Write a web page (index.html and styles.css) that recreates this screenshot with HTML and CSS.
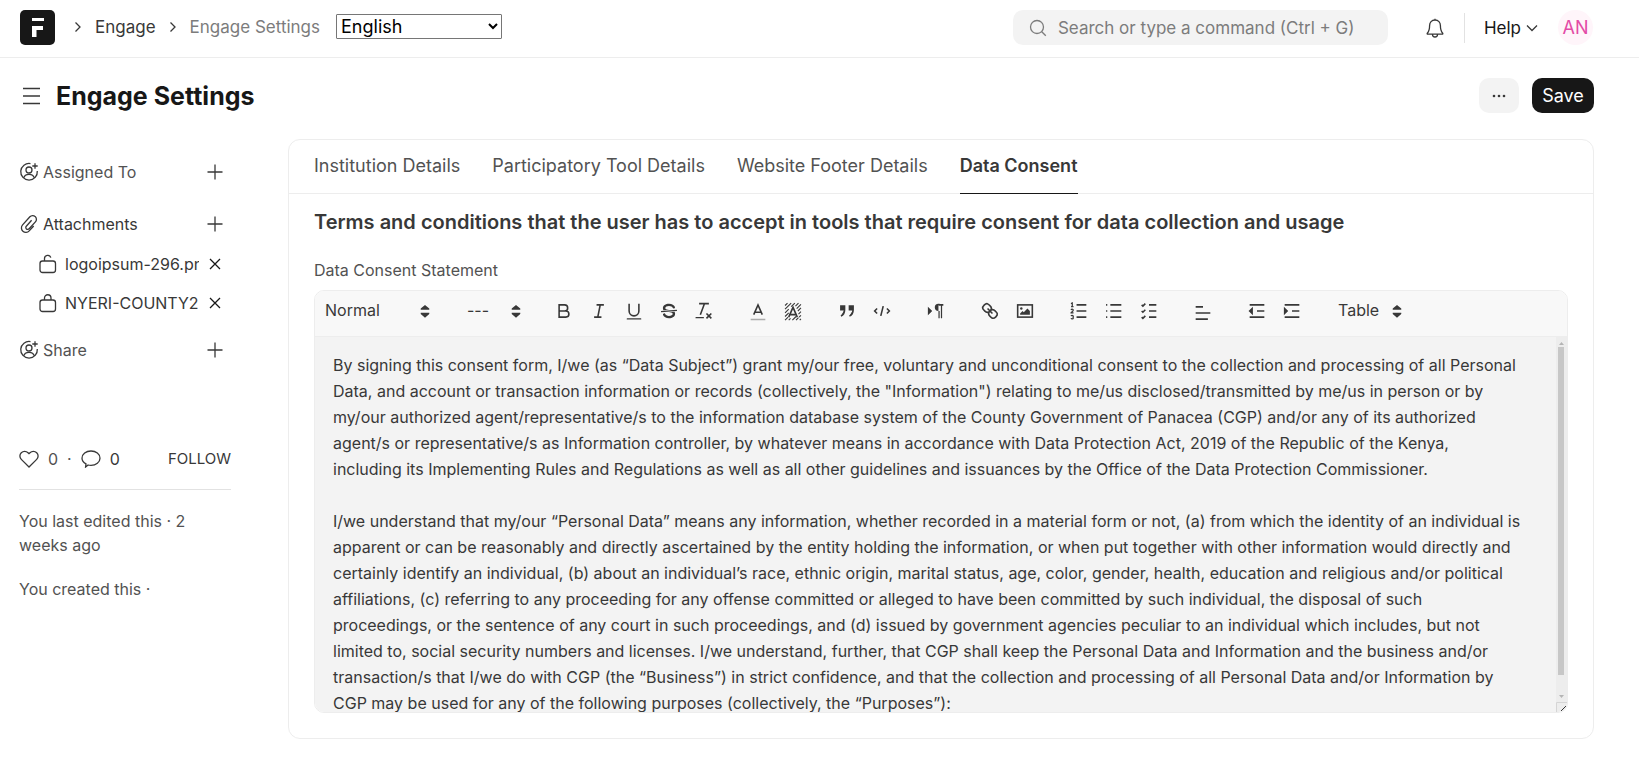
FILE: index.html
```html
<!DOCTYPE html>
<html lang="en">
<head>
<meta charset="utf-8">
<title>Engage Settings</title>
<link rel="stylesheet" href="styles.css">
</head>
<body>
<svg class="sprite" aria-hidden="true">
  <symbol id="chev" viewBox="0 0 8 12"><path d="M1.5 1.5 6 6l-4.500 4.500"/></symbol>
  <symbol id="plus" viewBox="0 0 16 16"><path d="M8 .5v15M.5 8h15"/></symbol>
  <symbol id="close" viewBox="0 0 12 12"><path d="m1 1 10 10m0-10-10 10"/></symbol>
  <symbol id="assign" viewBox="0 0 20 20"><path d="M11.500 1.600A8.300 8.300 0 1 0 18.300 9M4.600 16.200c.7-2.700 2.700-3.900 5.400-3.900s4.700 1.200 5.400 3.900M16 1.300v5.400M13.300 4h5.400"/><circle cx="10" cy="8" r="3"/></symbol>
  <symbol id="updown" viewBox="0 0 18 18"><path d="M5.500 10.500h7v1L9 14.500l-3.500-3zM5.500 8h7V7L9 4 5.500 7z"/></symbol>
</svg>

<header class="navbar">
  <a class="logo" href="#" aria-label="Home"><svg viewBox="0 0 35 35"><path d="M12 8h12v3H12zM12 16h11v4h-6.500v7H12z"/></svg></a>
  <nav class="crumbs">
    <svg class="chev"><use href="#chev"/></svg>
    <a href="#">Engage</a>
    <svg class="chev"><use href="#chev"/></svg>
    <a class="current" href="#">Engage Settings</a>
  </nav>
  <select class="lang" aria-label="Language"><option>English</option></select>
  <label class="search">
    <svg viewBox="0 0 18 18"><circle cx="8" cy="8" r="6.500"/><path d="m12.800 12.800 4 4"/></svg>
    <input type="text" placeholder="Search or type a command (Ctrl + G)" aria-label="Search">
  </label>
  <button class="bell" aria-label="Notifications"><svg viewBox="0 0 18 20"><path d="M9 2c-3.400 0-5.400 2.500-5.400 5.500 0 4-.6 6-2.300 7.700-.3.500-.1 1 .5 1h14.400c.6 0 .8-.5.500-1-1.700-1.700-2.300-3.700-2.300-7.700C14.400 4.500 12.400 2 9 2zM9 2V.7M6.500 16.500a2.500 2.500 0 0 0 5 0"/></svg></button>
  <button class="help">Help <svg viewBox="0 0 12 8"><path d="m1 1.500 5 5 5-5"/></svg></button>
  <button class="avatar">AN</button>
</header>

<div class="page-head">
  <button class="burger" aria-label="Toggle sidebar"><svg viewBox="0 0 17 18"><path d="M0 1.500h17M0 9h17M0 16.500h17"/></svg></button>
  <h1>Engage Settings</h1>
  <button class="more" aria-label="More"><svg viewBox="0 0 14 4"><circle cx="2" cy="2" r="1.300"/><circle cx="7" cy="2" r="1.300"/><circle cx="12" cy="2" r="1.300"/></svg></button>
  <button class="save">Save</button>
</div>

<div class="layout">
  <aside class="sidebar">
    <div class="row">
      <svg class="ico" viewBox="0 0 20 20"><use href="#assign"/></svg><span>Assigned To</span>
      <button aria-label="Add assignee"><svg class="plus"><use href="#plus"/></svg></button>
    </div>
    <div class="row dark">
      <svg class="ico" viewBox="0 0 20 20"><path d="m12.600 6.300-5.300 5.900a1.900 1.900 0 0 0 2.800 2.600l6.300-6.900a3.700 3.700 0 0 0-.2-5.300 3.700 3.700 0 0 0-5.300.2L3.600 10.900a4.400 4.400 0 0 0 .3 6.300 4.400 4.400 0 0 0 6.300-.3l4.500-4.900"/></svg><span>Attachments</span>
      <button aria-label="Add attachment"><svg class="plus"><use href="#plus"/></svg></button>
    </div>
    <div class="row file">
      <svg class="ico" viewBox="0 0 20 20"><rect x="2" y="7" width="15.500" height="11.500" rx="2.500"/><path d="M6.500 7V4.500a3.200 3.200 0 0 1 6.300-.8"/></svg><a href="#">logoipsum-296.png</a>
      <button aria-label="Remove file"><svg class="close"><use href="#close"/></svg></button>
    </div>
    <div class="row file">
      <svg class="ico" viewBox="0 0 20 20"><rect x="2" y="7" width="15.500" height="11.500" rx="2.500"/><path d="M6.500 7V5a3.200 3.200 0 0 1 6.500 0v2"/></svg><a href="#">NYERI-COUNTY2.png</a>
      <button aria-label="Remove file"><svg class="close"><use href="#close"/></svg></button>
    </div>
    <div class="row share">
      <svg class="ico" viewBox="0 0 20 20"><use href="#assign"/></svg><span>Share</span>
      <button aria-label="Add share"><svg class="plus"><use href="#plus"/></svg></button>
    </div>
    <div class="stats">
      <svg class="ico" viewBox="0 0 20 18"><path d="M10 17 2.300 9.400a4.700 4.700 0 0 1 0-6.700 4.700 4.700 0 0 1 6.700 0l1 1 1-1a4.700 4.700 0 0 1 6.700 0 4.700 4.700 0 0 1 0 6.700z"/></svg>
      <span>0</span><span>·</span>
      <svg class="ico" viewBox="0 0 20 18"><path d="M10 1c5 0 9 3.200 9 7.200s-4 7.200-9 7.200c-1 0-2-.1-2.900-.4L4.600 17l.4-3.200C2.500 12.500 1 10.500 1 8.200 1 4.200 5 1 10 1z"/></svg>
      <span class="ink">0</span>
      <button class="follow">FOLLOW</button>
    </div>
    <p>You last edited this · 2 weeks ago</p>
    <p>You created this ·</p>
  </aside>

  <main class="card">
    <nav class="tabs">
      <a href="#">Institution Details</a>
      <a href="#">Participatory Tool Details</a>
      <a href="#">Website Footer Details</a>
      <a class="active" href="#">Data Consent</a>
    </nav>
    <section class="section">
      <h2>Terms and conditions that the user has to accept in tools that require consent for data collection and usage</h2>
      <div class="field-label" id="consent-label">Data Consent Statement</div>
      <div class="editor">
        <div class="toolbar">
          <div class="picker heading"><select aria-label="Heading"><option>Normal</option></select><svg><use href="#updown"/></svg></div>
          <div class="picker size"><select aria-label="Size"><option>---</option></select><svg><use href="#updown"/></svg></div>
          <div class="group">
            <button aria-label="Bold"><svg viewBox="0 0 18 18"><path d="M5 4h4.500a2.500 2.500 0 0 1 0 5H5zM5 9h5.500a2.500 2.500 0 0 1 0 5H5z"/></svg></button>
            <button aria-label="Italic"><svg viewBox="0 0 18 18"><path d="M7 4h6M5 14h6M8 14l2-10"/></svg></button>
            <button aria-label="Underline"><svg viewBox="0 0 18 18"><path d="M5 3v6a4 4 0 0 0 8 0V3"/><rect class="f" x="3" y="15" width="12" height="1" rx=".5"/></svg></button>
            <button aria-label="Strike"><svg viewBox="0 0 18 18"><path class="thin" d="m15.500 8.500-13 1"/><path class="f" d="M9.007 8C6.542 7.791 6 7.519 6 6.500 6 5.792 7.283 5 9 5c1.571 0 2.765.679 2.969 1.309a1 1 0 0 0 1.900-.617C13.356 4.106 11.354 3 9 3 6.200 3 4 4.538 4 6.500a3.200 3.200 0 0 0 .5 1.843ZM8.984 10C11.457 10.208 12 10.479 12 11.500c0 .708-1.283 1.500-3 1.500-1.571 0-2.765-.679-2.969-1.309a1 1 0 1 0-1.900.617C4.644 13.894 6.646 15 9 15c2.800 0 5-1.538 5-3.500a3.200 3.200 0 0 0-.5-1.843Z"/></svg></button>
            <button aria-label="Clear formatting"><svg viewBox="0 0 18 18"><path d="M5 3h8M6 12l3.350-9M11 11l4 4M15 11l-4 4"/><rect class="f" x="2" y="14" width="7" height="1" rx=".5"/></svg></button>
          </div>
          <div class="group">
            <button aria-label="Text colour"><svg viewBox="0 0 18 18"><path class="faint" d="M3 16h12"/><path d="M5.500 12 9 4l3.500 8M11.630 10H6.380"/></svg></button>
            <button aria-label="Background colour"><svg viewBox="0 0 18 18"><path class="hatch" d="M2.500 4.500l2-2M2.500 7.500l5-5M2.500 10.500l3-3M7.500 5.500l3-3M2.500 13.500l3-3M11 5l2.500-2.500M2.500 16.500l2.500-2.500M12 7l3.500-3.500M13 9l2.500-2.500M13.500 11.500l2-2M14 14l1.500-1.500M5.500 16.500l1.500-1.500M8.500 16.500l3-3M11.500 16.500l2-2M14.500 16.500l1-1"/><path d="M5.500 14 9 6l3.500 8M11.630 12H6.380"/></svg></button>
          </div>
          <div class="group">
            <button aria-label="Quote"><svg viewBox="0 0 18 18"><path class="fs" d="M4 5h3v3H4zM11 5h3v3h-3zM7 8c0 4.031-3 5-3 5M14 8c0 4.031-3 5-3 5"/></svg></button>
            <button aria-label="Code"><svg viewBox="0 0 18 18"><path d="M5 7 3 9l2 2M13 7l2 2-2 2M10 5 8 13"/></svg></button>
          </div>
          <div class="group">
            <button aria-label="Text direction"><svg viewBox="0 0 18 18"><path class="fs" d="m3 11 2-2-2-2z"/><path d="M15 4h-4"/><path class="f" d="M11 3a3 3 0 0 0 0 6h1V3zM11 4h1v11h-1zM13 4h1v11h-1z"/></svg></button>
          </div>
          <div class="group">
            <button aria-label="Link"><svg viewBox="0 0 18 18"><path d="m7 7 4 4M8.900 4.577a3.476 3.476 0 0 1 .36 4.679A3.476 3.476 0 0 1 4.577 8.900C3.185 7.500 2.035 6.400 4.217 4.217S7.500 3.185 8.900 4.577ZM13.423 9.100a3.476 3.476 0 0 0-4.679-.36 3.476 3.476 0 0 0 .36 4.679c1.392 1.392 2.500 2.542 4.679.36S14.815 10.500 13.423 9.100Z"/></svg></button>
            <button aria-label="Image"><svg viewBox="0 0 18 18"><rect x="3" y="4" width="12" height="10"/><circle class="f" cx="6" cy="7" r="1"/><path class="f" d="M5 12v-1l2-2 1 1 3-3 2 2v3z"/></svg></button>
          </div>
          <div class="group">
            <button aria-label="Numbered list"><svg viewBox="0 0 18 18"><path d="M7 4h8M7 9h8M7 14h8"/><path class="thin" d="M2.500 5.500h2M2.400 2.900l1.100-.5v3M4.500 10.500h-2c0-.234 1.850-1.076 1.850-2.234A.959.959 0 0 0 2.500 8.156M2.500 14.846a.959.959 0 0 0 1.850-.109A.7.7 0 0 0 3.750 14a.688.688 0 0 0 .6-.736.959.959 0 0 0-1.850-.109"/></svg></button>
            <button aria-label="Bullet list"><svg viewBox="0 0 18 18"><path d="M6 4h9M6 9h9M6 14h9"/><path d="M2.500 4h1M2.500 9h1M2.500 14h1"/></svg></button>
            <button aria-label="Check list"><svg viewBox="0 0 18 18"><path d="M9 4h6M9 9h6M9 14h6M3 4l1 1 2-2M3 9l1 1 2-2M3 14l1 1 2-2"/></svg></button>
          </div>
          <div class="group low">
            <button aria-label="Align"><svg viewBox="0 0 18 18"><path d="M3 4h6M3 9h12M3 14h10"/></svg></button>
          </div>
          <div class="group">
            <button aria-label="Outdent"><svg viewBox="0 0 18 18"><path d="M3 4h12M9 9h6M3 14h12"/><path class="fs" d="M5 7v4L3 9z"/></svg></button>
            <button aria-label="Indent"><svg viewBox="0 0 18 18"><path d="M3 4h12M9 9h6M3 14h12"/><path class="fs" d="M3 7v4l2-2z"/></svg></button>
          </div>
          <div class="picker table"><select aria-label="Table"><option>Table</option></select><svg><use href="#updown"/></svg></div>
        </div>
        <div class="body">
          <div class="content" contenteditable="true" role="textbox" aria-multiline="true" aria-labelledby="consent-label">
            <p>By signing this consent form, I/we (as “Data Subject”) grant my/our free, voluntary and unconditional consent to the collection and processing of all Personal Data, and account or transaction information or records (collectively, the "Information") relating to me/us disclosed/transmitted by me/us in person or by my/our authorized agent/representative/s to the information database system of the County Government of Panacea (CGP) and/or any of its authorized agent/s or representative/s as Information controller, by whatever means in accordance with Data Protection Act, 2019 of the Republic of the Kenya, including its Implementing Rules and Regulations as well as all other guidelines and issuances by the Office of the Data Protection Commissioner.</p>
            <p><br></p>
            <p>I/we understand that my/our “Personal Data” means any information, whether recorded in a material form or not, (a) from which the identity of an individual is apparent or can be reasonably and directly ascertained by the entity holding the information, or when put together with other information would directly and certainly identify an individual, (b) about an individual’s race, ethnic origin, marital status, age, color, gender, health, education and religious and/or political affiliations, (c) referring to any proceeding for any offense committed or alleged to have been committed by such individual, the disposal of such proceedings, or the sentence of any court in such proceedings, and (d) issued by government agencies peculiar to an individual which includes, but not limited to, social security numbers and licenses. I/we understand, further, that CGP shall keep the Personal Data and Information and the business and/or transaction/s that I/we do with CGP (the “Business”) in strict confidence, and that the collection and processing of all Personal Data and/or Information by CGP may be used for any of the following purposes (collectively, the “Purposes”):</p>
          </div>
          <div class="scroll" aria-hidden="true">
            <svg viewBox="0 0 11 10"><path d="M3 8 5.500 5 8 8z"/></svg>
            <div class="thumb"></div>
            <svg viewBox="0 0 11 10"><path d="M3 3 5.500 6 8 3z"/></svg>
            <svg class="grip" viewBox="0 0 11 10"><path d="M.5 10V.500H11"/><path class="dots" d="m5 9 5-5M8 9l2-2"/></svg>
          </div>
        </div>
      </div>
    </section>
  </main>
</div>
</body>
</html>
```
FILE: styles.css
```css
* { box-sizing: border-box; }
body {
  margin: 0;
  background: #fff;
  color: #383838;
  font: 16px/24px Inter, "Liberation Sans", sans-serif;
}
a { color: inherit; text-decoration: none; }
button, select, input { font: inherit; color: inherit; margin: 0; }
button { padding: 0; border: 0; background: none; cursor: pointer; }
svg { display: block; flex: none; fill: none; stroke: #383838; stroke-width: 1.3; }
h1, h2, p { margin: 0; }
.sprite { position: absolute; width: 0; height: 0; }

.navbar {
  display: flex;
  align-items: center;
  height: 58px;
  padding: 0 46px 2px 20px;
  border-bottom: 1px solid #ededed;
  font-size: 17px;
}
.logo { width: 35px; height: 35px; border-radius: 5px; background: #171717; }
.logo svg { fill: #fff; stroke: none; }
.crumbs { display: flex; align-items: center; gap: 13px; padding: 0 0 1px 19px; }
.crumbs .current { color: #7c7c7c; }
.chev { width: 8px; height: 12px; }
.lang {
  width: 166px;
  height: 25px;
  margin: 0 0 2px 16px;
  padding: 0;
  border: 1px solid #767676;
  border-radius: 1px;
  background: #fff;
  color: #000;
  font-size: 18px;
}
.search {
  display: flex;
  align-items: center;
  gap: 11px;
  width: 375px;
  height: 35px;
  margin-left: auto;
  padding: 0 16px;
  border-radius: 10px;
  background: #f3f3f3;
}
.search svg { width: 18px; height: 18px; stroke: #7c7c7c; }
.search input { flex: 1; min-width: 0; padding: 0; border: 0; outline: 0; background: none; }
.search input::placeholder { color: #7c7c7c; }
.bell { margin-left: 38px; }
.bell svg { width: 18px; height: 20px; }
.help {
  display: flex;
  align-items: center;
  gap: 5px;
  height: 30px;
  margin-left: 20px;
  padding-left: 19px;
  border-left: 1px solid #e2e2e2;
  color: #171717;
}
.help svg { width: 12px; height: 8px; }
.avatar { width: 35px; height: 35px; margin-left: 20px; border-radius: 50%; background: #fff5fa; color: #e34aa6; font-size: 18px; }

.page-head {
  display: flex;
  align-items: center;
  height: 75px;
  padding: 0 45px 0 23px;
}
.burger svg { width: 17px; height: 18px; }
h1 { margin: 0 auto 0 16px; color: #171717; font-size: 25px; line-height: 32px; font-weight: 700; }
.more { display: grid; place-items: center; width: 40px; height: 35px; border-radius: 10px; background: #f3f3f3; }
.more svg { width: 14px; height: 4px; fill: #383838; stroke: none; }
.save { width: 62px; height: 35px; margin-left: 13px; border-radius: 10px; background: #171717; color: #fff; font-size: 18px; }

.layout { display: flex; gap: 57px; padding: 6px 45px 19px 19px; }
.sidebar { flex: 0 0 212px; min-width: 0; padding-top: 21px; color: #525252; }
.row { display: flex; align-items: center; gap: 4px; height: 24px; margin-bottom: 28px; }
.row .ico { width: 20px; height: 20px; }
.row button { display: grid; place-items: center; width: 18px; height: 24px; margin: 0 7px 0 auto; }
.plus { width: 16px; height: 16px; }
.close { width: 12px; height: 12px; stroke: #171717; }
.dark, .file { color: #383838; }
.dark { margin-bottom: 16px; }
.file { gap: 7px; margin-bottom: 15px; padding-left: 19px; }
.file a { flex: 1; min-width: 0; overflow: hidden; white-space: nowrap; }
.share { margin-top: 23px; margin-bottom: 85px; }
.stats { display: flex; align-items: center; gap: 9px; padding-bottom: 18px; margin-bottom: 19px; border-bottom: 1px solid #e2e2e2; }
.stats .ico { width: 20px; height: 18px; }
.ink { color: #383838; }
.follow { margin-left: auto; font-size: 15px; color: #383838; }
.sidebar p { margin-bottom: 20px; padding-right: 30px; }

.card { flex: 1; min-width: 0; border: 1px solid #ededed; border-radius: 12px; }
.tabs { display: flex; gap: 32px; height: 54px; padding: 0 25px; border-bottom: 1px solid #ededed; font-size: 18px; color: #525252; }
.tabs a { height: 54px; padding-top: 14px; }
.tabs .active { border-bottom: 1px solid #171717; color: #383838; font-weight: 600; }
.section { padding: 14px 25px 15px; }
h2 { font-size: 20px; line-height: 28px; font-weight: 600; }
.field-label { margin: 22px 0 8px; color: #525252; }
.editor { margin-bottom: 10px; border: 1px solid #ededed; border-radius: 10px; overflow: hidden; }
.toolbar { display: flex; align-items: center; gap: 19px; height: 46px; padding: 0 10px 5px; border-bottom: 1px solid #ededed; background: #f8f8f8; }
.group { display: flex; }
.group button { display: grid; place-items: center; width: 35px; height: 30px; }
.group svg { width: 22px; height: 22px; }
.low { padding-top: 4px; }
.f { fill: #383838; stroke: none; }
.fs { fill: #383838; }
.thin { stroke-width: 1; }
.faint { opacity: .4; }
.hatch { stroke-width: .9; }
.picker { position: relative; padding-bottom: 2px; }
.picker select { appearance: none; width: 100%; padding: 0; border: 0; outline: 0; background: none; }
.picker svg { position: absolute; right: 0; top: 2px; width: 22px; height: 22px; fill: #383838; stroke: none; pointer-events: none; }
.heading { width: 111px; }
.size { width: 60px; margin-left: 12px; }
.table { width: 70px; margin-left: 10px; }
.body { display: flex; height: 375px; background: #f3f3f3; }
.content { flex: 1; min-width: 0; overflow: hidden; padding: 15px 35px 15px 18px; line-height: 26px; outline: 0; }
.scroll { display: flex; flex-direction: column; width: 11px; background: #ededed; }
.scroll svg { width: 11px; height: 10px; fill: #b5b5b5; stroke: none; }
.thumb { flex: 1; width: 6px; margin: 0 auto 17px 2px; background: #c7c7c7; }
.scroll .grip { fill: none; stroke: #d5d5d5; stroke-width: 1; }
.grip .dots { stroke: #383838; }
```
